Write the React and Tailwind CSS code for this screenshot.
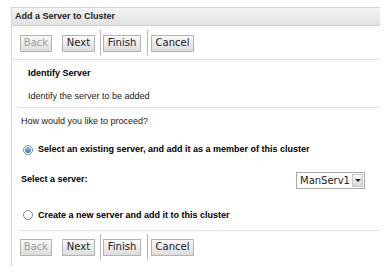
import React from "react";

const sans = { fontFamily: '"Liberation Sans", Arial, sans-serif' };

const Btn = ({ label, w, disabled }) => (
    <div
        className={`h-[17px] ${w} flex items-center justify-center border border-[#b4b4b4] bg-gradient-to-b from-[#fafafa] to-[#dcdcdc] text-[10px] leading-none ${disabled ? "text-[#a0a0a0]" : "text-[#222]"}`}
        style={{ fontFamily: '"DejaVu Sans", sans-serif' }}
    >
        {label}
    </div>
);

const Sep = () => <div className="w-px h-[26px] bg-[#b8b8b8]" />;

const Toolbar = () => (
    <div className="flex items-center pl-[8px]">
        <Btn label="Back" w="w-[32px]" disabled />
        <div className="w-[10px]" />
        <Btn label="Next" w="w-[33px]" />
        <div className="w-[5px]" />
        <Sep />
        <div className="w-[2px]" />
        <Btn label="Finish" w="w-[38px]" />
        <div className="w-[6px]" />
        <Sep />
        <div className="w-[3px]" />
        <Btn label="Cancel" w="w-[43px]" />
    </div>
);

const Radio = ({ checked }) => (
    <div className="w-[10px] h-[10px] rounded-full border border-[#7a8a9a] bg-white flex items-center justify-center">
        {checked && <div className="w-[6px] h-[6px] rounded-full bg-gradient-to-b from-[#8fc0f0] to-[#2f6fbf]" />}
    </div>
);

export default function App() {
    return (
        <div className="w-[392px] h-[279px] bg-white text-black" style={sans}>
            <div className="pt-[7px] pl-[11px]">
                <div className="w-[369px] h-[260px] border-l border-t border-[#d4d4d4] flex flex-col">
                    <div className="h-[18px] flex items-center pl-[3px] bg-gradient-to-b from-[#f4f4f4] to-[#e2e2e2] border-b border-[#cfcfcf] text-[9px] font-bold text-[#222]">
                        Add a Server to Cluster
                    </div>
                    <div className="h-[33px] flex items-center pt-[1px]">
                        <Toolbar />
                    </div>
                    <div className="h-px bg-[#e2e2e2]" />
                    <div className="pl-[16px] h-[27px] flex items-center text-[9px] font-bold">Identify Server</div>
                    <div className="pl-[16px] h-[20px] flex items-center text-[9px] text-[#222]">Identify the server to be added</div>
                    <div className="ml-[6px] h-px bg-[#e2e2e2]" />
                    <div className="pl-[9px] h-[27px] flex items-center text-[9px] text-[#222]">How would you like to proceed?</div>
                    <div className="pl-[11px] h-[30px] flex items-center gap-[5px] text-[9px] font-bold">
                        <Radio checked />
                        <span>Select an existing server, and add it as a member of this cluster</span>
                    </div>
                    <div className="pl-[9px] pr-[15px] h-[30px] flex items-center justify-between text-[9px] font-bold">
                        <span>Select a server:</span>
                        <div className="w-[69px] h-[17px] border border-[#a8a8a8] bg-white flex items-center justify-between">
                            <span className="pl-[3px] text-[10px] font-normal text-[#222]" style={{ fontFamily: '"DejaVu Sans", sans-serif' }}>ManServ1</span>
                            <div className="w-[11px] h-[13px] mr-px bg-gradient-to-b from-[#f8f8f8] to-[#d8d8d8] border border-[#c8c8c8] flex items-center justify-center">
                                <div className="w-0 h-0 border-l-[3px] border-r-[3px] border-t-[3px] border-l-transparent border-r-transparent border-t-[#222]" />
                            </div>
                        </div>
                    </div>
                    <div className="pl-[11px] h-[35px] pt-[15px] flex items-start gap-[5px] text-[9px] font-bold">
                        <Radio />
                        <span className="leading-[10px]">Create a new server and add it to this cluster</span>
                    </div>
                    <div className="ml-[6px] h-px bg-[#e2e2e2]" />
                    <div className="pt-[3px]">
                        <Toolbar />
                    </div>
                </div>
            </div>
        </div>
    );
}
